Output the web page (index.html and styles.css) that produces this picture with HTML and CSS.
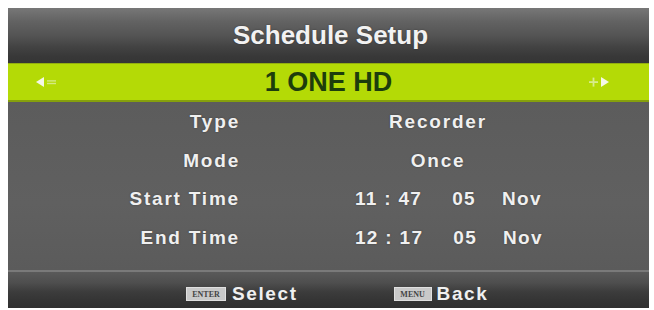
FILE: index.html
```html
<!DOCTYPE html>
<html>
<head>
<meta charset="utf-8">
<link rel="stylesheet" href="styles.css">
</head>
<body>
<div class="panel">
  <div class="header">Schedule Setup</div>
  <div class="channel">
    <span class="nav nav-left">
      <svg width="24" height="14" viewBox="0 0 24 14"><polygon points="9,2 9,12 1,7" fill="#f4f7e6"/><rect x="12" y="5.2" width="9" height="1.4" fill="#d4ea84"/><rect x="12" y="7.8" width="9" height="1.4" fill="#d4ea84"/></svg>
    </span>
    <span class="channel-name">1 ONE HD</span>
    <span class="nav nav-right">
      <svg width="24" height="14" viewBox="0 0 24 14"><rect x="1" y="6.2" width="9" height="1.8" fill="#d8ec8c"/><rect x="4.6" y="2.6" width="1.8" height="9" fill="#d8ec8c"/><polygon points="13,2 13,12 21,7" fill="#f4f7e6"/></svg>
    </span>
  </div>
  <div class="body">
    <div class="row">
      <div class="label">Type</div>
      <div class="value center">Recorder</div>
    </div>
    <div class="row">
      <div class="label">Mode</div>
      <div class="value center">Once</div>
    </div>
    <div class="row">
      <div class="label">Start Time</div>
      <div class="value time"><span>11 : 47</span><span>05</span><span>Nov</span></div>
    </div>
    <div class="row">
      <div class="label">End Time</div>
      <div class="value time"><span>12 : 17</span><span>05</span><span>Nov</span></div>
    </div>
  </div>
  <div class="footer">
    <div class="hint"><span class="key">ENTER</span><span class="hint-text">Select</span></div>
    <div class="hint"><span class="key key-menu">MENU</span><span class="hint-text">Back</span></div>
  </div>
</div>
</body>
</html>
```
FILE: styles.css
```css
html, body {
  margin: 0;
  padding: 0;
  background: #ffffff;
}
body {
  font-family: "Liberation Sans", Arial, sans-serif;
  font-weight: bold;
}
.panel {
  margin: 8px 0 0 8px;
  width: 641px;
  height: 300px;
  display: flex;
  flex-direction: column;
  background: #5d5d5d;
}
.header {
  height: 55px;
  display: flex;
  align-items: center;
  justify-content: center;
  color: #f2f2f2;
  font-size: 26px;
  padding-left: 4px;
  box-sizing: border-box;
  background: linear-gradient(#777777 0%, #626262 25%, #545454 50%, #434343 70%, #383838 88%, #353535 100%);
  text-shadow: 0 0 2px rgba(0,0,0,0.4);
}
.channel {
  height: 39px;
  box-sizing: border-box;
  border-top: 1px solid #93ae10;
  border-bottom: 2px solid #86a00c;
  background: #b4da06;
  display: flex;
  align-items: center;
}
.channel-name {
  flex: 1;
  text-align: center;
  color: #1d3d0c;
  font-size: 27px;
}
.nav {
  width: 70px;
  display: flex;
  align-items: center;
  box-sizing: border-box;
}
.nav-left {
  padding-left: 27px;
}
.nav-right {
  padding-left: 9px;
}
.nav svg {
  display: block;
}
.body {
  flex: 1;
  padding-top: 1px;
  background: linear-gradient(#5c5c5c, #606060 60%, #5b5b5b);
}
.row {
  height: 38.5px;
  display: grid;
  grid-template-columns: 232px 115px 1fr;
  align-items: center;
  color: #f0f0f0;
  font-size: 19px;
  letter-spacing: 1.8px;
  text-shadow: 0 0 2px rgba(0,0,0,0.35);
}
.label {
  grid-column: 1;
  text-align: right;
}
.value {
  grid-column: 3;
}
.value.center {
  width: 166px;
  text-align: center;
}
.value.time {
  display: flex;
  letter-spacing: 1.3px;
}
.value.time span:nth-child(2) {
  margin-left: 30px;
}
.value.time span:nth-child(3) {
  margin-left: 26px;
}
.footer {
  height: 38px;
  box-sizing: border-box;
  border-top: 2px solid #7a7a7a;
  background: linear-gradient(#5a5a5a 0%, #4e4e4e 30%, #3c3c3c 55%, #343434 80%, #303030 100%);
  display: flex;
  align-items: center;
  padding-top: 8px;
  padding-left: 178px;
  color: #f0f0f0;
}
.hint {
  display: flex;
  align-items: center;
}
.hint + .hint {
  margin-left: 96px;
}
.key {
  display: inline-block;
  width: 40px;
  height: 14px;
  line-height: 14px;
  box-sizing: border-box;
  background: #c9c9c9;
  border: 1px solid #e0e0e0;
  color: #444444;
  font-family: "Liberation Serif", serif;
  font-size: 8px;
  letter-spacing: 0;
  text-align: center;
  margin-right: 6px;
}
.key-menu {
  width: 38px;
  margin-right: 5px;
}
.hint-text {
  font-size: 19px;
  letter-spacing: 1.6px;
}
```
